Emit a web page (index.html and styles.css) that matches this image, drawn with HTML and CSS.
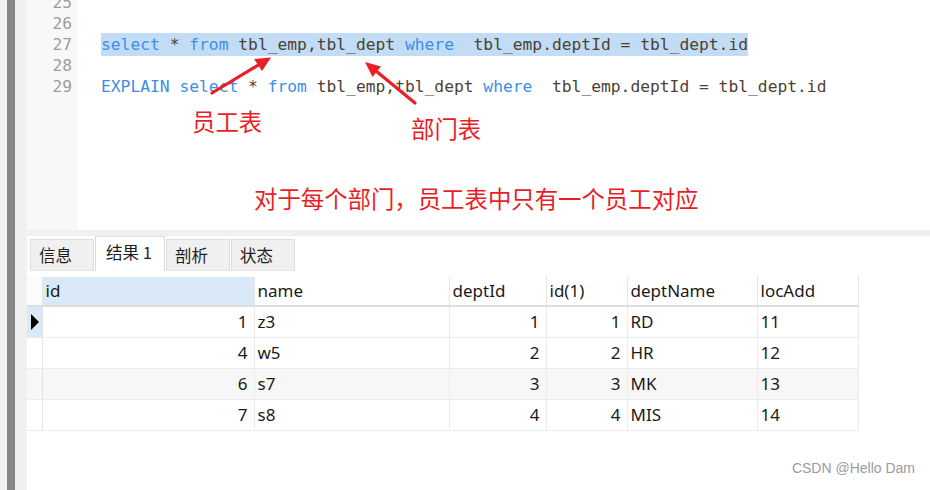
FILE: index.html
```html
<!DOCTYPE html>
<html lang="zh">
<head>
<meta charset="utf-8">
<link rel="stylesheet" href="styles.css">
</head>
<body>
<div class="app">
  <div class="side"><div class="bar"></div></div>
  <div class="main">
    <div class="editor">
      <div class="gutter">
        <div class="ln">25</div>
        <div class="ln">26</div>
        <div class="ln">27</div>
        <div class="ln">28</div>
        <div class="ln">29</div>
      </div>
      <div class="code">
        <div class="line"></div>
        <div class="line"></div>
        <div class="line"><span class="sel"><span class="kw">select</span> * <span class="kw">from</span> tbl_emp,tbl_dept <span class="kw">where</span>  tbl_emp.deptId = tbl_dept.id</span></div>
        <div class="line"></div>
        <div class="line"><span class="kw">EXPLAIN</span> <span class="kw">select</span> * <span class="kw">from</span> tbl_emp,tbl_dept <span class="kw">where</span>  tbl_emp.deptId = tbl_dept.id</div>
      </div>
    </div>
    <div class="band"></div>
    <div class="tabs">
      <div class="tab">信息</div>
      <div class="tab active">结果 1</div>
      <div class="tab">剖析</div>
      <div class="tab">状态</div>
    </div>
    <table class="grid">
      <colgroup>
        <col class="c-ind"><col class="c-id"><col class="c-name"><col class="c-dept"><col class="c-id1"><col class="c-dname"><col class="c-loc">
      </colgroup>
      <thead>
        <tr><th class="ind"></th><th class="hl">id</th><th>name</th><th>deptId</th><th>id(1)</th><th>deptName</th><th>locAdd</th></tr>
      </thead>
      <tbody>
        <tr><td class="ind cur"><span class="tri"></span></td><td class="num">1</td><td>z3</td><td class="num">1</td><td class="num">1</td><td>RD</td><td>11</td></tr>
        <tr><td class="ind"></td><td class="num">4</td><td>w5</td><td class="num">2</td><td class="num">2</td><td>HR</td><td>12</td></tr>
        <tr class="alt"><td class="ind"></td><td class="num">6</td><td>s7</td><td class="num">3</td><td class="num">3</td><td>MK</td><td>13</td></tr>
        <tr><td class="ind"></td><td class="num">7</td><td>s8</td><td class="num">4</td><td class="num">4</td><td>MIS</td><td>14</td></tr>
      </tbody>
    </table>
  </div>
  <div class="notes">
    <svg class="arrows" width="930" height="490" viewBox="0 0 930 490">
      <line x1="212" y1="93" x2="259" y2="64.6" stroke="#ea1f26" stroke-width="3.2" stroke-linecap="round"/>
      <polygon points="271,57.5 262,71 254,59" fill="#ea1f26"/>
      <line x1="415" y1="103" x2="376" y2="71" stroke="#ea1f26" stroke-width="3.2" stroke-linecap="round"/>
      <polygon points="365,62 381,66.5 372.5,77" fill="#ea1f26"/>
    </svg>
    <div class="note n1">员工表</div>
    <div class="note n2">部门表</div>
    <div class="note n3">对于每个部门，员工表中只有一个员工对应</div>
  </div>
  <div class="watermark">CSDN @Hello Dam</div>
</div>
</body>
</html>
```
FILE: styles.css
```css
html, body {
  margin: 0;
  padding: 0;
  background: #ffffff;
}
.app {
  position: relative;
  width: 930px;
  height: 490px;
  display: flex;
  overflow: hidden;
  background: #ffffff;
}
.side {
  width: 27px;
  flex: none;
  background: #f0f0f0;
  display: flex;
  padding-left: 7px;
  box-sizing: border-box;
}
.bar {
  width: 8px;
  background: #878787;
}
.main {
  flex: 1;
  display: flex;
  flex-direction: column;
  min-width: 0;
}
.editor {
  height: 230px;
  display: flex;
  overflow: hidden;
  flex: none;
  font-family: "DejaVu Sans Mono", "Liberation Mono", monospace;
  font-size: 16.3px;
}
.gutter {
  width: 50px;
  flex: none;
  background: #f8f8f8;
  box-sizing: border-box;
  padding-right: 5px;
  text-align: right;
  color: #9d9d9d;
  margin-top: -8px;
  padding-top: 0;
}
.ln, .line {
  height: 21px;
  line-height: 21px;
  white-space: pre;
}
.code {
  flex: 1;
  padding-left: 24px;
  color: #4b4234;
  margin-top: -8px;
}
.kw {
  color: #3c8ee8;
}
.sel {
  background: #c3dcf6;
  padding: 2px 0;
}
.band {
  height: 6px;
  background: #f0f0f0;
  flex: none;
}
.tabs {
  height: 35px;
  flex: none;
  display: flex;
  align-items: flex-end;
  padding-left: 3px;
  font-family: "Noto Sans CJK SC", "Noto Sans", sans-serif;
  font-size: 16.5px;
  color: #1e1e1e;
}
.tab {
  height: 32px;
  line-height: 31px;
  width: 64px;
  box-sizing: border-box;
  background: #f0f0f0;
  border: 1px solid #dddddd;
  border-bottom: 1px solid #e6e6e6;
  padding-left: 8px;
  margin-right: 1px;
}
.tab.active {
  height: 35px;
  line-height: 31px;
  width: 70px;
  background: #ffffff;
  border-bottom: none;
  padding-left: 10px;
}
.grid {
  margin-top: 6px;
  border-collapse: collapse;
  table-layout: fixed;
  width: 831px;
  font-family: "Noto Sans", "Liberation Sans", sans-serif;
  font-size: 17px;
  color: #1a1a1a;
}
.c-ind { width: 15px; }
.c-id { width: 212px; }
.c-name { width: 195px; }
.c-dept { width: 97px; }
.c-id1 { width: 81px; }
.c-dname { width: 130px; }
.c-loc { width: 101px; }
.grid th {
  height: 28px;
  padding: 0 3px;
  text-align: left;
  font-weight: normal;
  border-right: 1px solid #e6e6e6;
  border-bottom: 2px solid #dedede;
  background: #ffffff;
  line-height: 28px;
}
.grid th.hl {
  background: #dae9f7;
}
.grid th.ind {
  background: #fbfbfb;
}
.grid td {
  height: 30px;
  padding: 0 3px;
  border-right: 1px solid #ebebeb;
  border-bottom: 1px solid #ebebeb;
  line-height: 30px;
  white-space: nowrap;
}
.grid td.num {
  text-align: right;
  padding-right: 6px;
}
.grid td.ind {
  padding: 0;
  border-right: 1px solid #e3e3e3;
}
.grid td.cur {
  background: #dae9f7;
}
.grid tr.alt td {
  background: #f7f7f7;
}
.tri {
  display: block;
  width: 0;
  height: 0;
  margin-left: 4px;
  border-top: 8px solid transparent;
  border-bottom: 8px solid transparent;
  border-left: 8px solid #000000;
}
.notes {
  position: absolute;
  left: 0;
  top: 0;
  width: 930px;
  height: 490px;
  pointer-events: none;
}
.arrows {
  position: absolute;
  left: 0;
  top: 0;
}
.note {
  position: absolute;
  font-family: "Noto Sans CJK SC", sans-serif;
  font-size: 23.4px;
  line-height: 23px;
  color: #ec1c26;
  white-space: nowrap;
}
.n1 { left: 192px; top: 110px; }
.n2 { left: 411px; top: 117px; }
.n3 { left: 254px; top: 187px; }
.watermark {
  position: absolute;
  right: 15px;
  bottom: 14px;
  font-family: "Liberation Sans", Arial, sans-serif;
  font-size: 14px;
  color: #9c9c9c;
}
```
